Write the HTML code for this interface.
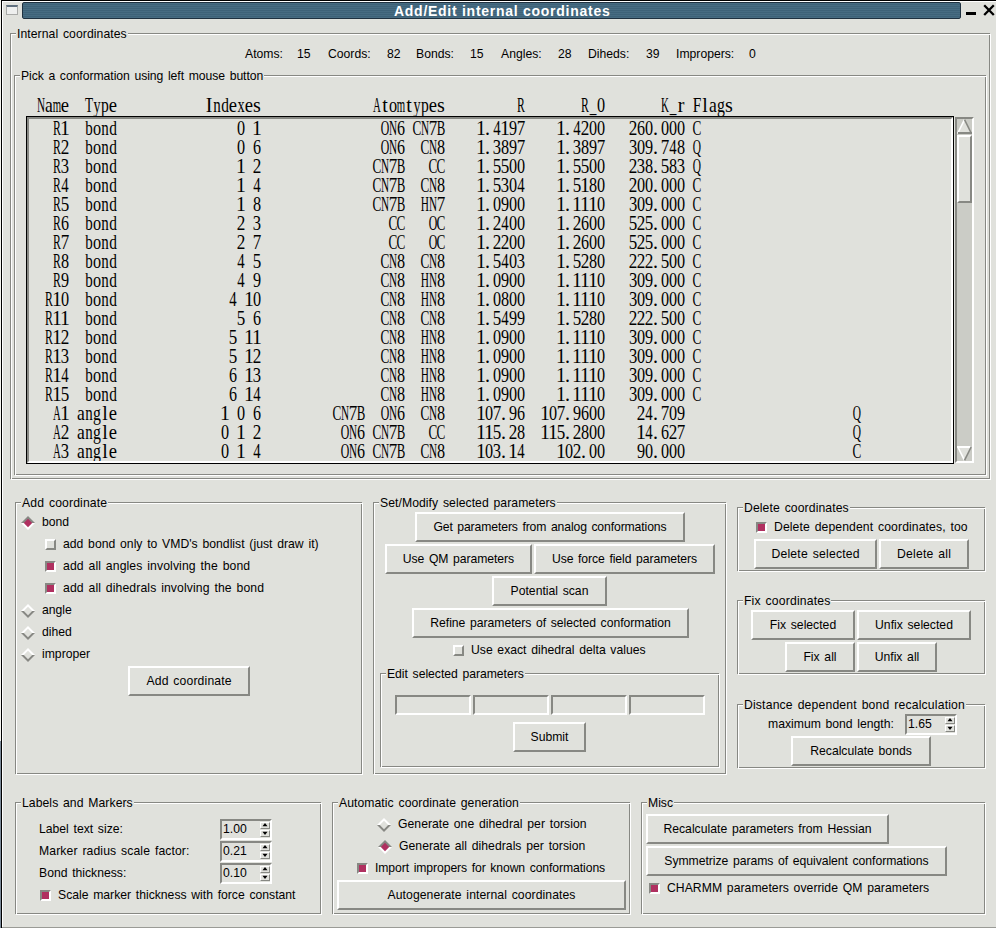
<!DOCTYPE html>
<html><head><meta charset="utf-8"><style>
html,body{margin:0;padding:0;width:996px;height:928px;overflow:hidden;background:#e0e1dc}
body>div,body>span,body>svg{position:absolute}
.t{font-family:"Liberation Sans",sans-serif;font-size:12.2px;line-height:14px;word-spacing:1.3px;color:#000;white-space:pre}
.bl{text-align:center}
.tt{font-family:"Liberation Sans",sans-serif;font-weight:bold;font-size:14px;letter-spacing:0.73px;color:#fff;white-space:pre}
.mono{font-family:"Liberation Mono",monospace;font-size:18px;line-height:19px;color:#000;white-space:pre;transform-origin:0 0;transform:scaleX(0.7407)}
</style></head><body>
<div style="left:0;top:0;width:996px;height:928px;background:#e0e1dc"></div>
<div style="left:0px;top:0px;width:1px;height:741px;background:#f4f4ef"></div>
<div style="left:0px;top:741px;width:1px;height:187px;background:#7b8a99"></div>
<div style="left:1px;top:0px;width:1px;height:928px;background:#000"></div>
<div style="left:2px;top:1px;width:1px;height:926px;background:#fff"></div>
<div style="left:1px;top:0px;width:995px;height:1px;background:#000"></div>
<div style="left:2px;top:1px;width:994px;height:1px;background:#fff"></div>
<div style="left:2px;top:927px;width:994px;height:1px;background:#9a9b96"></div>
<div style="left:22px;top:2px;width:939px;height:17px;box-sizing:border-box;border:1px solid #1f3140;border-radius:2px;background:repeating-linear-gradient(#476c82 0px,#476c82 1px,#3e6278 1px,#3e6278 2px)"></div>
<div class="tt" style="left:394px;top:3px;height:17px;line-height:17px">Add/Edit internal coordinates</div>
<div style="left:6px;top:5px;width:12px;height:10px;box-sizing:border-box;border:1px solid #a9aaa8;border-top:2px solid #5f6f7e;background:#eeefee"></div>
<div style="left:966px;top:12px;width:10px;height:3px;background:#000"></div>
<svg style="left:982px;top:4px" width="14" height="13" viewBox="0 0 14 13"><path d="M2.2 1.3 L11.8 11 M11.8 1.3 L2.2 11" stroke="#000" stroke-width="2.3"/></svg>
<div style="left:10px;top:33px;width:980px;height:446px;border:1px solid #878883;box-sizing:border-box"></div>
<div style="left:11px;top:34px;width:980px;height:446px;border:1px solid #ffffff;box-sizing:border-box"></div>
<span class="t" style="left:16px;top:27px;background:#e0e1dc;padding:0 1px 0 1px;letter-spacing:0.067px;">Internal coordinates</span>
<span class="t" style="left:245px;top:47px;">Atoms:</span>
<span class="t" style="left:297px;top:47px;">15</span>
<span class="t" style="left:328px;top:47px;">Coords:</span>
<span class="t" style="left:387px;top:47px;">82</span>
<span class="t" style="left:416px;top:47px;">Bonds:</span>
<span class="t" style="left:470px;top:47px;">15</span>
<span class="t" style="left:501px;top:47px;">Angles:</span>
<span class="t" style="left:558px;top:47px;">28</span>
<span class="t" style="left:588px;top:47px;">Diheds:</span>
<span class="t" style="left:646px;top:47px;">39</span>
<span class="t" style="left:676px;top:47px;">Impropers:</span>
<span class="t" style="left:749px;top:47px;">0</span>
<div style="left:14px;top:75px;width:972px;height:400px;border:1px solid #878883;box-sizing:border-box"></div>
<div style="left:15px;top:76px;width:972px;height:400px;border:1px solid #ffffff;box-sizing:border-box"></div>
<span class="t" style="left:20px;top:69px;background:#e0e1dc;padding:0 1px 0 1px;letter-spacing:-0.046px;">Pick a conformation using left mouse button</span>
<svg style="left:0;top:0" width="996" height="480"><g font-family="Liberation Serif" font-size="20.0" text-anchor="middle" fill="#000"><text transform="scale(0.56,1)" y="112" x="73.2">N</text><text transform="scale(0.88,1)" y="112" x="55.7 810.2">aa</text><text transform="scale(0.54,1)" y="112" x="105.6 698.1 742.6">mAm</text><text transform="scale(0.93,1)" y="112" x="69.9 121.5 250.5 267.7 465.6">eeeee</text><text transform="scale(0.66,1)" y="112" x="134.8">T</text><text transform="scale(0.71,1)" y="112" x="136.6 587.3">yy</text><text transform="scale(0.78,1)" y="112" x="134.6 544.9">pp</text><text y="112" x="209.0 257.0 385.0 409.0 441.0 681.0 705.0 729.0">Isttsrls</text><text transform="scale(0.75,1)" y="112" x="289.3">n</text><text transform="scale(0.77,1)" y="112" x="292.2 905.2">dF</text><text transform="scale(0.72,1)" y="112" x="334.7">x</text><text transform="scale(0.81,1)" y="112" x="485.2 742.0">o0</text><text transform="scale(0.59,1)" y="112" x="883.1 991.5">RR</text><text transform="scale(0.67,1)" y="112" x="885.1 1004.5">__</text><text transform="scale(0.55,1)" y="112" x="1209.1">K</text><text transform="scale(0.79,1)" y="112" x="912.7">g</text><text transform="scale(0.59,1)" y="135" x="96.6 652.5">RO</text><text transform="scale(0.99,1)" y="135" x="65.7 259.6 485.9 510.1 566.7">11111</text><text transform="scale(0.75,1)" y="135" x="118.7 140.0">bn</text><text transform="scale(0.81,1)" y="135" x="119.8 297.5 633.3 732.1 742.0 801.2 821.0 830.9 840.7">o09000000</text><text transform="scale(0.77,1)" y="135" x="146.8">d</text><text transform="scale(0.56,1)" y="135" x="701.8 758.9">NN</text><text transform="scale(0.8,1)" y="135" x="501.2 801.2">66</text><text transform="scale(0.66,1)" y="135" x="631.8 1056.1">CC</text><text transform="scale(0.85,1)" y="135" x="509.4 612.9">77</text><text transform="scale(0.64,1)" y="135" x="689.1">B</text><text y="135" x="487.5 567.5 655.5">...</text><text transform="scale(0.74,1)" y="135" x="671.6 779.7">44</text><text transform="scale(0.86,1)" y="135" x="680.2 736.0">22</text><text transform="scale(0.59,1)" y="154" x="96.6 652.5">RO</text><text transform="scale(0.86,1)" y="154" x="75.6">2</text><text transform="scale(0.75,1)" y="154" x="118.7 140.0">bn</text><text transform="scale(0.81,1)" y="154" x="119.8 297.5 544.4 623.5 633.3 722.2 732.1 791.4 801.2 840.7">o088989098</text><text transform="scale(0.77,1)" y="154" x="146.8">d</text><text transform="scale(0.8,1)" y="154" x="321.2 501.2">66</text><text transform="scale(0.56,1)" y="154" x="701.8 773.2">NN</text><text transform="scale(0.66,1)" y="154" x="643.9">C</text><text transform="scale(0.99,1)" y="154" x="485.9 566.7">11</text><text y="154" x="487.5 567.5 655.5">...</text><text transform="scale(0.83,1)" y="154" x="598.8 695.2 762.7">333</text><text transform="scale(0.85,1)" y="154" x="612.9 707.1 782.4">777</text><text transform="scale(0.74,1)" y="154" x="909.5">4</text><text transform="scale(0.57,1)" y="154" x="1222.8">Q</text><text transform="scale(0.59,1)" y="173" x="96.6">R</text><text transform="scale(0.83,1)" y="173" x="78.3 772.3 820.5">333</text><text transform="scale(0.75,1)" y="173" x="118.7 140.0">bn</text><text transform="scale(0.81,1)" y="173" x="119.8 633.3 643.2 732.1 742.0 801.2 830.9">o000088</text><text transform="scale(0.77,1)" y="173" x="146.8">d</text><text transform="scale(0.99,1)" y="173" x="243.4 485.9 566.7">111</text><text transform="scale(0.86,1)" y="173" x="298.8 736.0">22</text><text transform="scale(0.66,1)" y="173" x="571.2 656.1 668.2">CCC</text><text transform="scale(0.56,1)" y="173" x="687.5">N</text><text transform="scale(0.85,1)" y="173" x="462.4 584.7 594.1 678.8 688.2 782.4">755555</text><text transform="scale(0.64,1)" y="173" x="626.6">B</text><text y="173" x="487.5 567.5 655.5">...</text><text transform="scale(0.57,1)" y="173" x="1222.8">Q</text><text transform="scale(0.59,1)" y="192" x="96.6">R</text><text transform="scale(0.74,1)" y="192" x="87.8 347.3 704.1">444</text><text transform="scale(0.75,1)" y="192" x="118.7 140.0">bn</text><text transform="scale(0.81,1)" y="192" x="119.8 544.4 633.3 732.1 742.0 791.4 801.2 821.0 830.9 840.7">o808000000</text><text transform="scale(0.77,1)" y="192" x="146.8">d</text><text transform="scale(0.99,1)" y="192" x="243.4 485.9 566.7 590.9">1111</text><text transform="scale(0.66,1)" y="192" x="571.2 643.9 1056.1">CCC</text><text transform="scale(0.56,1)" y="192" x="687.5 773.2">NN</text><text transform="scale(0.85,1)" y="192" x="462.4 584.7 678.8">755</text><text transform="scale(0.64,1)" y="192" x="626.6">B</text><text y="192" x="487.5 567.5 655.5">...</text><text transform="scale(0.83,1)" y="192" x="608.4">3</text><text transform="scale(0.86,1)" y="192" x="736.0">2</text><text transform="scale(0.59,1)" y="211" x="96.6">R</text><text transform="scale(0.85,1)" y="211" x="76.5 462.4 518.8">577</text><text transform="scale(0.75,1)" y="211" x="118.7 140.0">bn</text><text transform="scale(0.81,1)" y="211" x="119.8 317.3 613.6 623.5 633.3 643.2 742.0 791.4 801.2 821.0 830.9 840.7">o80900009000</text><text transform="scale(0.77,1)" y="211" x="146.8">d</text><text transform="scale(0.99,1)" y="211" x="243.4 485.9 566.7 582.8 590.9 599.0">111111</text><text transform="scale(0.66,1)" y="211" x="571.2 1056.1">CC</text><text transform="scale(0.56,1)" y="211" x="687.5 773.2">NN</text><text transform="scale(0.64,1)" y="211" x="626.6">B</text><text transform="scale(0.57,1)" y="211" x="745.6">H</text><text y="211" x="487.5 567.5 655.5">...</text><text transform="scale(0.83,1)" y="211" x="762.7">3</text><text transform="scale(0.59,1)" y="230" x="96.6 733.9">RO</text><text transform="scale(0.8,1)" y="230" x="81.2 731.2">66</text><text transform="scale(0.75,1)" y="230" x="118.7 140.0">bn</text><text transform="scale(0.81,1)" y="230" x="119.8 633.3 643.2 732.1 742.0 821.0 830.9 840.7">o0000000</text><text transform="scale(0.77,1)" y="230" x="146.8">d</text><text transform="scale(0.86,1)" y="230" x="280.2 577.9 670.9 745.3">2222</text><text transform="scale(0.83,1)" y="230" x="309.6">3</text><text transform="scale(0.66,1)" y="230" x="595.5 607.6 668.2 1056.1">CCCC</text><text transform="scale(0.99,1)" y="230" x="485.9 566.7">11</text><text y="230" x="487.5 567.5 655.5">...</text><text transform="scale(0.74,1)" y="230" x="682.4">4</text><text transform="scale(0.85,1)" y="230" x="744.7 763.5">55</text><text transform="scale(0.59,1)" y="249" x="96.6 733.9">RO</text><text transform="scale(0.85,1)" y="249" x="76.5 302.4 744.7 763.5">7755</text><text transform="scale(0.75,1)" y="249" x="118.7 140.0">bn</text><text transform="scale(0.81,1)" y="249" x="119.8 633.3 643.2 732.1 742.0 821.0 830.9 840.7">o0000000</text><text transform="scale(0.77,1)" y="249" x="146.8">d</text><text transform="scale(0.86,1)" y="249" x="280.2 577.9 587.2 670.9 745.3">22222</text><text transform="scale(0.66,1)" y="249" x="595.5 607.6 668.2 1056.1">CCCC</text><text transform="scale(0.99,1)" y="249" x="485.9 566.7">11</text><text y="249" x="487.5 567.5 655.5">...</text><text transform="scale(0.8,1)" y="249" x="731.2">6</text><text transform="scale(0.59,1)" y="268" x="96.6">R</text><text transform="scale(0.81,1)" y="268" x="80.2 119.8 495.1 544.4 633.3 732.1 742.0 830.9 840.7">8o8808000</text><text transform="scale(0.75,1)" y="268" x="118.7 140.0">bn</text><text transform="scale(0.77,1)" y="268" x="146.8">d</text><text transform="scale(0.74,1)" y="268" x="325.7 682.4">44</text><text transform="scale(0.85,1)" y="268" x="302.4 584.7 678.8 782.4">5555</text><text transform="scale(0.66,1)" y="268" x="583.3 643.9 1056.1">CCC</text><text transform="scale(0.56,1)" y="268" x="701.8 773.2">NN</text><text transform="scale(0.99,1)" y="268" x="485.9 566.7">11</text><text y="268" x="487.5 567.5 655.5">...</text><text transform="scale(0.83,1)" y="268" x="627.7">3</text><text transform="scale(0.86,1)" y="268" x="680.2 736.0 745.3 754.7">2222</text><text transform="scale(0.59,1)" y="287" x="96.6">R</text><text transform="scale(0.81,1)" y="287" x="80.2 119.8 317.3 495.1 544.4 613.6 623.5 633.3 643.2 742.0 791.4 801.2 821.0 830.9 840.7">9o9880900009000</text><text transform="scale(0.75,1)" y="287" x="118.7 140.0">bn</text><text transform="scale(0.77,1)" y="287" x="146.8">d</text><text transform="scale(0.74,1)" y="287" x="325.7">4</text><text transform="scale(0.66,1)" y="287" x="583.3 1056.1">CC</text><text transform="scale(0.56,1)" y="287" x="701.8 773.2">NN</text><text transform="scale(0.57,1)" y="287" x="745.6">H</text><text transform="scale(0.99,1)" y="287" x="485.9 566.7 582.8 590.9 599.0">11111</text><text y="287" x="487.5 567.5 655.5">...</text><text transform="scale(0.83,1)" y="287" x="762.7">3</text><text transform="scale(0.59,1)" y="306" x="83.1">R</text><text transform="scale(0.99,1)" y="306" x="57.6 251.5 485.9 566.7 582.8 590.9 599.0">1111111</text><text transform="scale(0.81,1)" y="306" x="80.2 119.8 317.3 495.1 544.4 613.6 623.5 633.3 643.2 742.0 791.4 801.2 821.0 830.9 840.7">0o0880800009000</text><text transform="scale(0.75,1)" y="306" x="118.7 140.0">bn</text><text transform="scale(0.77,1)" y="306" x="146.8">d</text><text transform="scale(0.74,1)" y="306" x="314.9">4</text><text transform="scale(0.66,1)" y="306" x="583.3 1056.1">CC</text><text transform="scale(0.56,1)" y="306" x="701.8 773.2">NN</text><text transform="scale(0.57,1)" y="306" x="745.6">H</text><text y="306" x="487.5 567.5 655.5">...</text><text transform="scale(0.83,1)" y="306" x="762.7">3</text><text transform="scale(0.59,1)" y="325" x="83.1">R</text><text transform="scale(0.99,1)" y="325" x="57.6 65.7 485.9 566.7">1111</text><text transform="scale(0.75,1)" y="325" x="118.7 140.0">bn</text><text transform="scale(0.81,1)" y="325" x="119.8 495.1 544.4 633.3 643.2 732.1 742.0 830.9 840.7">o88998000</text><text transform="scale(0.77,1)" y="325" x="146.8">d</text><text transform="scale(0.85,1)" y="325" x="283.5 584.7 678.8 782.4">5555</text><text transform="scale(0.8,1)" y="325" x="321.2">6</text><text transform="scale(0.66,1)" y="325" x="583.3 643.9 1056.1">CCC</text><text transform="scale(0.56,1)" y="325" x="701.8 773.2">NN</text><text y="325" x="487.5 567.5 655.5">...</text><text transform="scale(0.74,1)" y="325" x="682.4">4</text><text transform="scale(0.86,1)" y="325" x="680.2 736.0 745.3 754.7">2222</text><text transform="scale(0.59,1)" y="344" x="83.1">R</text><text transform="scale(0.99,1)" y="344" x="57.6 251.5 259.6 485.9 566.7 582.8 590.9 599.0">11111111</text><text transform="scale(0.86,1)" y="344" x="75.6">2</text><text transform="scale(0.75,1)" y="344" x="118.7 140.0">bn</text><text transform="scale(0.81,1)" y="344" x="119.8 495.1 544.4 613.6 623.5 633.3 643.2 742.0 791.4 801.2 821.0 830.9 840.7">o880900009000</text><text transform="scale(0.77,1)" y="344" x="146.8">d</text><text transform="scale(0.85,1)" y="344" x="274.1">5</text><text transform="scale(0.66,1)" y="344" x="583.3 1056.1">CC</text><text transform="scale(0.56,1)" y="344" x="701.8 773.2">NN</text><text transform="scale(0.57,1)" y="344" x="745.6">H</text><text y="344" x="487.5 567.5 655.5">...</text><text transform="scale(0.83,1)" y="344" x="762.7">3</text><text transform="scale(0.59,1)" y="363" x="83.1">R</text><text transform="scale(0.99,1)" y="363" x="57.6 251.5 485.9 566.7 582.8 590.9 599.0">1111111</text><text transform="scale(0.83,1)" y="363" x="78.3 762.7">33</text><text transform="scale(0.75,1)" y="363" x="118.7 140.0">bn</text><text transform="scale(0.81,1)" y="363" x="119.8 495.1 544.4 613.6 623.5 633.3 643.2 742.0 791.4 801.2 821.0 830.9 840.7">o880900009000</text><text transform="scale(0.77,1)" y="363" x="146.8">d</text><text transform="scale(0.85,1)" y="363" x="274.1">5</text><text transform="scale(0.86,1)" y="363" x="298.8">2</text><text transform="scale(0.66,1)" y="363" x="583.3 1056.1">CC</text><text transform="scale(0.56,1)" y="363" x="701.8 773.2">NN</text><text transform="scale(0.57,1)" y="363" x="745.6">H</text><text y="363" x="487.5 567.5 655.5">...</text><text transform="scale(0.59,1)" y="382" x="83.1">R</text><text transform="scale(0.99,1)" y="382" x="57.6 251.5 485.9 566.7 582.8 590.9 599.0">1111111</text><text transform="scale(0.74,1)" y="382" x="87.8">4</text><text transform="scale(0.75,1)" y="382" x="118.7 140.0">bn</text><text transform="scale(0.81,1)" y="382" x="119.8 495.1 544.4 613.6 623.5 633.3 643.2 742.0 791.4 801.2 821.0 830.9 840.7">o880900009000</text><text transform="scale(0.77,1)" y="382" x="146.8">d</text><text transform="scale(0.8,1)" y="382" x="291.2">6</text><text transform="scale(0.83,1)" y="382" x="309.6 762.7">33</text><text transform="scale(0.66,1)" y="382" x="583.3 1056.1">CC</text><text transform="scale(0.56,1)" y="382" x="701.8 773.2">NN</text><text transform="scale(0.57,1)" y="382" x="745.6">H</text><text y="382" x="487.5 567.5 655.5">...</text><text transform="scale(0.59,1)" y="401" x="83.1">R</text><text transform="scale(0.99,1)" y="401" x="57.6 251.5 485.9 566.7 582.8 590.9 599.0">1111111</text><text transform="scale(0.85,1)" y="401" x="76.5">5</text><text transform="scale(0.75,1)" y="401" x="118.7 140.0">bn</text><text transform="scale(0.81,1)" y="401" x="119.8 495.1 544.4 613.6 623.5 633.3 643.2 742.0 791.4 801.2 821.0 830.9 840.7">o880900009000</text><text transform="scale(0.77,1)" y="401" x="146.8">d</text><text transform="scale(0.8,1)" y="401" x="291.2">6</text><text transform="scale(0.74,1)" y="401" x="347.3">4</text><text transform="scale(0.66,1)" y="401" x="583.3 1056.1">CC</text><text transform="scale(0.56,1)" y="401" x="701.8 773.2">NN</text><text transform="scale(0.57,1)" y="401" x="745.6">H</text><text y="401" x="487.5 567.5 655.5">...</text><text transform="scale(0.83,1)" y="401" x="762.7">3</text><text transform="scale(0.54,1)" y="420" x="105.6">A</text><text transform="scale(0.99,1)" y="420" x="65.7 227.3 485.9 550.5">1111</text><text transform="scale(0.88,1)" y="420" x="92.0">a</text><text transform="scale(0.75,1)" y="420" x="118.7">n</text><text transform="scale(0.79,1)" y="420" x="122.8">g</text><text y="420" x="105.0 503.5 567.5 655.5">l...</text><text transform="scale(0.93,1)" y="420" x="121.5">e</text><text transform="scale(0.81,1)" y="420" x="297.5 544.4 603.7 633.3 682.7 712.3 732.1 742.0 830.9 840.7">0809090009</text><text transform="scale(0.8,1)" y="420" x="321.2 501.2 651.2 731.2">6666</text><text transform="scale(0.66,1)" y="420" x="510.6 643.9">CC</text><text transform="scale(0.56,1)" y="420" x="616.1 701.8 773.2">NNN</text><text transform="scale(0.85,1)" y="420" x="415.3 584.7 660.0 782.4">7777</text><text transform="scale(0.64,1)" y="420" x="564.1">B</text><text transform="scale(0.59,1)" y="420" x="652.5">O</text><text transform="scale(0.86,1)" y="420" x="745.3">2</text><text transform="scale(0.74,1)" y="420" x="877.0">4</text><text transform="scale(0.57,1)" y="420" x="1503.5">Q</text><text transform="scale(0.54,1)" y="439" x="105.6">A</text><text transform="scale(0.86,1)" y="439" x="75.6 298.8 596.5 670.9 782.6">22222</text><text transform="scale(0.88,1)" y="439" x="92.0">a</text><text transform="scale(0.75,1)" y="439" x="118.7">n</text><text transform="scale(0.79,1)" y="439" x="122.8">g</text><text y="439" x="105.0 503.5 567.5 655.5">l...</text><text transform="scale(0.93,1)" y="439" x="121.5">e</text><text transform="scale(0.81,1)" y="439" x="277.8 643.2 722.2 732.1 742.0">08800</text><text transform="scale(0.99,1)" y="439" x="243.4 485.9 493.9 550.5 558.6 647.5">111111</text><text transform="scale(0.59,1)" y="439" x="584.7">O</text><text transform="scale(0.56,1)" y="439" x="630.4 687.5">NN</text><text transform="scale(0.8,1)" y="439" x="451.2 831.2">66</text><text transform="scale(0.66,1)" y="439" x="571.2 656.1 668.2">CCC</text><text transform="scale(0.85,1)" y="439" x="462.4 584.7 660.0 801.2">7557</text><text transform="scale(0.64,1)" y="439" x="626.6">B</text><text transform="scale(0.74,1)" y="439" x="877.0">4</text><text transform="scale(0.57,1)" y="439" x="1503.5">Q</text><text transform="scale(0.54,1)" y="458" x="105.6">A</text><text transform="scale(0.83,1)" y="458" x="78.3 598.8">33</text><text transform="scale(0.88,1)" y="458" x="92.0">a</text><text transform="scale(0.75,1)" y="458" x="118.7">n</text><text transform="scale(0.79,1)" y="458" x="122.8">g</text><text y="458" x="105.0 503.5 583.5 655.5">l...</text><text transform="scale(0.93,1)" y="458" x="121.5">e</text><text transform="scale(0.81,1)" y="458" x="277.8 544.4 603.7 702.5 732.1 742.0 791.4 801.2 821.0 830.9 840.7">08000090000</text><text transform="scale(0.99,1)" y="458" x="243.4 485.9 518.2 566.7">1111</text><text transform="scale(0.74,1)" y="458" x="347.3 704.1">44</text><text transform="scale(0.59,1)" y="458" x="584.7">O</text><text transform="scale(0.56,1)" y="458" x="630.4 687.5 773.2">NNN</text><text transform="scale(0.8,1)" y="458" x="451.2">6</text><text transform="scale(0.66,1)" y="458" x="571.2 643.9 1298.5">CCC</text><text transform="scale(0.85,1)" y="458" x="462.4">7</text><text transform="scale(0.64,1)" y="458" x="626.6">B</text><text transform="scale(0.86,1)" y="458" x="670.9">2</text></g></svg>
<div style="left:26px;top:116px;width:928px;height:348px;box-sizing:border-box;border:1px solid #000"></div>
<div style="left:27px;top:117px;width:926px;height:346px;box-sizing:border-box;border:2px solid;border-color:#878883 #ffffff #ffffff #878883"></div>
<div style="left:955px;top:117px;width:19px;height:346px;box-sizing:border-box;border:2px solid;border-color:#878883 #ffffff #ffffff #878883;background:#cbccc6"></div>
<div style="left:957px;top:135px;width:15px;height:68px;box-sizing:border-box;border:2px solid;border-color:#ffffff #878883 #878883 #ffffff"></div>
<div style="left:959px;top:137px;width:11px;height:64px;background:#e0e1dc"></div>
<svg style="left:957px;top:119px" width="15" height="15" viewBox="0 0 15 15"><polygon points="0,15 7.5,0 15,15" fill="#e0e1dc"/><line x1="0.6" y1="14.5" x2="7.5" y2="0.6" stroke="#ffffff" stroke-width="1.6"/><line x1="7.5" y1="0.6" x2="14.4" y2="14.5" stroke="#878883" stroke-width="1.6"/><rect x="1" y="13" width="14" height="2" fill="#878883"/></svg>
<svg style="left:957px;top:446px" width="15" height="15" viewBox="0 0 15 15"><polygon points="0,0 15,0 7.5,15" fill="#e0e1dc"/><rect x="0" y="0" width="15" height="2" fill="#ffffff"/><line x1="0.6" y1="0.5" x2="7.5" y2="14.4" stroke="#ffffff" stroke-width="1.6"/><line x1="14.4" y1="0.5" x2="7.5" y2="14.4" stroke="#878883" stroke-width="1.6"/></svg>
<div style="left:15px;top:502px;width:347px;height:272px;border:1px solid #878883;box-sizing:border-box"></div>
<div style="left:16px;top:503px;width:347px;height:272px;border:1px solid #ffffff;box-sizing:border-box"></div>
<span class="t" style="left:21px;top:496px;background:#e0e1dc;padding:0 1px 0 1px;letter-spacing:0.136px;">Add coordinate</span>
<svg style="left:21px;top:515.5px" width="15" height="14" viewBox="0 0 15 14"><polygon points="0,7 7,0 14,7" fill="#878883"/><polygon points="0,7 14,7 7,14" fill="#ffffff"/><polygon points="7,2.8 11.2,7 7,11.2 2.8,7" fill="#b03060"/></svg>
<span class="t" style="left:42px;top:515px;">bond</span>
<div style="left:45px;top:539px;width:11px;height:11px;box-sizing:border-box;border:2px solid;border-color:#ffffff #878883 #878883 #ffffff;background:#e0e1dc"></div>
<span class="t" style="left:63px;top:537px;letter-spacing:0.023px;">add bond only to VMD's bondlist (just draw it)</span>
<div style="left:45px;top:561px;width:11px;height:11px;box-sizing:border-box;border:2px solid;border-color:#878883 #ffffff #ffffff #878883;background:#b03060"></div>
<span class="t" style="left:63px;top:559px;letter-spacing:0.117px;">add all angles involving the bond</span>
<div style="left:45px;top:583px;width:11px;height:11px;box-sizing:border-box;border:2px solid;border-color:#878883 #ffffff #ffffff #878883;background:#b03060"></div>
<span class="t" style="left:63px;top:581px;letter-spacing:0.117px;">add all dihedrals involving the bond</span>
<svg style="left:21px;top:603.5px" width="15" height="14" viewBox="0 0 15 14"><polygon points="0,7 7,0 14,7" fill="#ffffff"/><polygon points="0,7 14,7 7,14" fill="#878883"/><polygon points="7,2.8 11.2,7 7,11.2 2.8,7" fill="#e0e1dc"/></svg>
<span class="t" style="left:42px;top:603px;">angle</span>
<svg style="left:21px;top:625.5px" width="15" height="14" viewBox="0 0 15 14"><polygon points="0,7 7,0 14,7" fill="#ffffff"/><polygon points="0,7 14,7 7,14" fill="#878883"/><polygon points="7,2.8 11.2,7 7,11.2 2.8,7" fill="#e0e1dc"/></svg>
<span class="t" style="left:42px;top:625px;">dihed</span>
<svg style="left:21px;top:647.5px" width="15" height="14" viewBox="0 0 15 14"><polygon points="0,7 7,0 14,7" fill="#ffffff"/><polygon points="0,7 14,7 7,14" fill="#878883"/><polygon points="7,2.8 11.2,7 7,11.2 2.8,7" fill="#e0e1dc"/></svg>
<span class="t" style="left:42px;top:647px;">improper</span>
<div style="left:128px;top:666px;width:122px;height:30px;box-sizing:border-box;border:2px solid;border-color:#ffffff #878883 #878883 #ffffff"></div>
<div class="t bl" style="left:128px;top:666px;width:122px;height:30px;line-height:30px;letter-spacing:0.136px;text-indent:0.136px;">Add coordinate</div>
<div style="left:373px;top:502px;width:353px;height:272px;border:1px solid #878883;box-sizing:border-box"></div>
<div style="left:374px;top:503px;width:353px;height:272px;border:1px solid #ffffff;box-sizing:border-box"></div>
<span class="t" style="left:379px;top:496px;background:#e0e1dc;padding:0 1px 0 1px;letter-spacing:0.059px;">Set/Modify selected parameters</span>
<div style="left:415px;top:512px;width:270px;height:30px;box-sizing:border-box;border:2px solid;border-color:#ffffff #878883 #878883 #ffffff"></div>
<div class="t bl" style="left:415px;top:512px;width:270px;height:30px;line-height:30px;letter-spacing:-0.112px;text-indent:-0.112px;">Get parameters from analog conformations</div>
<div style="left:385px;top:544px;width:147px;height:30px;box-sizing:border-box;border:2px solid;border-color:#ffffff #878883 #878883 #ffffff"></div>
<div class="t bl" style="left:385px;top:544px;width:147px;height:30px;line-height:30px;letter-spacing:-0.062px;text-indent:-0.062px;">Use QM parameters</div>
<div style="left:534px;top:544px;width:181px;height:30px;box-sizing:border-box;border:2px solid;border-color:#ffffff #878883 #878883 #ffffff"></div>
<div class="t bl" style="left:534px;top:544px;width:181px;height:30px;line-height:30px;letter-spacing:-0.065px;text-indent:-0.065px;">Use force field parameters</div>
<div style="left:492px;top:576px;width:115px;height:30px;box-sizing:border-box;border:2px solid;border-color:#ffffff #878883 #878883 #ffffff"></div>
<div class="t bl" style="left:492px;top:576px;width:115px;height:30px;line-height:30px;">Potential scan</div>
<div style="left:412px;top:608px;width:277px;height:30px;box-sizing:border-box;border:2px solid;border-color:#ffffff #878883 #878883 #ffffff"></div>
<div class="t bl" style="left:412px;top:608px;width:277px;height:30px;line-height:30px;letter-spacing:-0.030px;text-indent:-0.030px;">Refine parameters of selected conformation</div>
<div style="left:453px;top:645px;width:11px;height:11px;box-sizing:border-box;border:2px solid;border-color:#ffffff #878883 #878883 #ffffff;background:#e0e1dc"></div>
<span class="t" style="left:471px;top:643px;">Use exact dihedral delta values</span>
<div style="left:380px;top:673px;width:339px;height:94px;border:1px solid #878883;box-sizing:border-box"></div>
<div style="left:381px;top:674px;width:339px;height:94px;border:1px solid #ffffff;box-sizing:border-box"></div>
<span class="t" style="left:386px;top:667px;background:#e0e1dc;padding:0 1px 0 1px;letter-spacing:-0.024px;">Edit selected parameters</span>
<div style="left:395px;top:695px;width:76px;height:20px;box-sizing:border-box;border:2px solid;border-color:#878883 #ffffff #ffffff #878883"></div>
<div style="left:473px;top:695px;width:76px;height:20px;box-sizing:border-box;border:2px solid;border-color:#878883 #ffffff #ffffff #878883"></div>
<div style="left:551px;top:695px;width:76px;height:20px;box-sizing:border-box;border:2px solid;border-color:#878883 #ffffff #ffffff #878883"></div>
<div style="left:629px;top:695px;width:76px;height:20px;box-sizing:border-box;border:2px solid;border-color:#878883 #ffffff #ffffff #878883"></div>
<div style="left:513px;top:722px;width:73px;height:30px;box-sizing:border-box;border:2px solid;border-color:#ffffff #878883 #878883 #ffffff"></div>
<div class="t bl" style="left:513px;top:722px;width:73px;height:30px;line-height:30px;">Submit</div>
<div style="left:737px;top:507px;width:248px;height:64px;border:1px solid #878883;box-sizing:border-box"></div>
<div style="left:738px;top:508px;width:248px;height:64px;border:1px solid #ffffff;box-sizing:border-box"></div>
<span class="t" style="left:743px;top:501px;background:#e0e1dc;padding:0 1px 0 1px;letter-spacing:0.105px;">Delete coordinates</span>
<div style="left:756px;top:522px;width:11px;height:11px;box-sizing:border-box;border:2px solid;border-color:#878883 #ffffff #ffffff #878883;background:#b03060"></div>
<span class="t" style="left:774px;top:520px;letter-spacing:0.105px;">Delete dependent coordinates, too</span>
<div style="left:754px;top:539px;width:123px;height:30px;box-sizing:border-box;border:2px solid;border-color:#ffffff #878883 #878883 #ffffff"></div>
<div class="t bl" style="left:754px;top:539px;width:123px;height:30px;line-height:30px;letter-spacing:0.196px;text-indent:0.196px;">Delete selected</div>
<div style="left:879px;top:539px;width:90px;height:30px;box-sizing:border-box;border:2px solid;border-color:#ffffff #878883 #878883 #ffffff"></div>
<div class="t bl" style="left:879px;top:539px;width:90px;height:30px;line-height:30px;letter-spacing:0.199px;text-indent:0.199px;">Delete all</div>
<div style="left:737px;top:600px;width:248px;height:74px;border:1px solid #878883;box-sizing:border-box"></div>
<div style="left:738px;top:601px;width:248px;height:74px;border:1px solid #ffffff;box-sizing:border-box"></div>
<span class="t" style="left:743px;top:594px;background:#e0e1dc;padding:0 1px 0 1px;letter-spacing:0.163px;">Fix coordinates</span>
<div style="left:751px;top:610px;width:104px;height:30px;box-sizing:border-box;border:2px solid;border-color:#ffffff #878883 #878883 #ffffff"></div>
<div class="t bl" style="left:751px;top:610px;width:104px;height:30px;line-height:30px;">Fix selected</div>
<div style="left:857px;top:610px;width:114px;height:30px;box-sizing:border-box;border:2px solid;border-color:#ffffff #878883 #878883 #ffffff"></div>
<div class="t bl" style="left:857px;top:610px;width:114px;height:30px;line-height:30px;">Unfix selected</div>
<div style="left:785px;top:642px;width:70px;height:30px;box-sizing:border-box;border:2px solid;border-color:#ffffff #878883 #878883 #ffffff"></div>
<div class="t bl" style="left:785px;top:642px;width:70px;height:30px;line-height:30px;">Fix all</div>
<div style="left:857px;top:642px;width:80px;height:30px;box-sizing:border-box;border:2px solid;border-color:#ffffff #878883 #878883 #ffffff"></div>
<div class="t bl" style="left:857px;top:642px;width:80px;height:30px;line-height:30px;">Unfix all</div>
<div style="left:737px;top:704px;width:248px;height:64px;border:1px solid #878883;box-sizing:border-box"></div>
<div style="left:738px;top:705px;width:248px;height:64px;border:1px solid #ffffff;box-sizing:border-box"></div>
<span class="t" style="left:743px;top:698px;background:#e0e1dc;padding:0 1px 0 1px;letter-spacing:0.172px;">Distance dependent bond recalculation</span>
<span class="t" style="left:768px;top:717px;">maximum bond length:</span>
<div style="left:905px;top:714px;width:52px;height:21px;box-sizing:border-box;border:2px solid;border-color:#878883 #ffffff #ffffff #878883"></div>
<span class="t" style="left:908px;top:717px;">1.65</span>
<div style="left:945px;top:717px;width:10px;height:7px;box-sizing:border-box;border:1px solid;border-color:#ffffff #878883 #878883 #ffffff"></div>
<div style="left:945px;top:725px;width:10px;height:7px;box-sizing:border-box;border:1px solid;border-color:#ffffff #878883 #878883 #ffffff"></div>
<svg style="left:0;top:0;overflow:visible" width="1" height="1"><polygon points="947.5,721.2 952.5,721.2 950.0,718" fill="#000"/><polygon points="947.5,726.8 952.5,726.8 950.0,730" fill="#000"/></svg>
<div style="left:791px;top:736px;width:140px;height:30px;box-sizing:border-box;border:2px solid;border-color:#ffffff #878883 #878883 #ffffff"></div>
<div class="t bl" style="left:791px;top:736px;width:140px;height:30px;line-height:30px;">Recalculate bonds</div>
<div style="left:15px;top:802px;width:306px;height:112px;border:1px solid #878883;box-sizing:border-box"></div>
<div style="left:16px;top:803px;width:306px;height:112px;border:1px solid #ffffff;box-sizing:border-box"></div>
<span class="t" style="left:21px;top:796px;background:#e0e1dc;padding:0 1px 0 1px;letter-spacing:0.062px;">Labels and Markers</span>
<span class="t" style="left:39px;top:822px;">Label text size:</span>
<div style="left:220px;top:819px;width:52px;height:21px;box-sizing:border-box;border:2px solid;border-color:#878883 #ffffff #ffffff #878883"></div>
<span class="t" style="left:223px;top:822px;">1.00</span>
<div style="left:260px;top:822px;width:10px;height:7px;box-sizing:border-box;border:1px solid;border-color:#ffffff #878883 #878883 #ffffff"></div>
<div style="left:260px;top:830px;width:10px;height:7px;box-sizing:border-box;border:1px solid;border-color:#ffffff #878883 #878883 #ffffff"></div>
<svg style="left:0;top:0;overflow:visible" width="1" height="1"><polygon points="262.5,826.2 267.5,826.2 265.0,823" fill="#000"/><polygon points="262.5,831.8 267.5,831.8 265.0,835" fill="#000"/></svg>
<span class="t" style="left:39px;top:844px;letter-spacing:0.113px;">Marker radius scale factor:</span>
<div style="left:220px;top:841px;width:52px;height:21px;box-sizing:border-box;border:2px solid;border-color:#878883 #ffffff #ffffff #878883"></div>
<span class="t" style="left:223px;top:844px;">0.21</span>
<div style="left:260px;top:844px;width:10px;height:7px;box-sizing:border-box;border:1px solid;border-color:#ffffff #878883 #878883 #ffffff"></div>
<div style="left:260px;top:852px;width:10px;height:7px;box-sizing:border-box;border:1px solid;border-color:#ffffff #878883 #878883 #ffffff"></div>
<svg style="left:0;top:0;overflow:visible" width="1" height="1"><polygon points="262.5,848.2 267.5,848.2 265.0,845" fill="#000"/><polygon points="262.5,853.8 267.5,853.8 265.0,857" fill="#000"/></svg>
<span class="t" style="left:39px;top:866px;">Bond thickness:</span>
<div style="left:220px;top:863px;width:52px;height:21px;box-sizing:border-box;border:2px solid;border-color:#878883 #ffffff #ffffff #878883"></div>
<span class="t" style="left:223px;top:866px;">0.10</span>
<div style="left:260px;top:866px;width:10px;height:7px;box-sizing:border-box;border:1px solid;border-color:#ffffff #878883 #878883 #ffffff"></div>
<div style="left:260px;top:874px;width:10px;height:7px;box-sizing:border-box;border:1px solid;border-color:#ffffff #878883 #878883 #ffffff"></div>
<svg style="left:0;top:0;overflow:visible" width="1" height="1"><polygon points="262.5,870.2 267.5,870.2 265.0,867" fill="#000"/><polygon points="262.5,875.8 267.5,875.8 265.0,879" fill="#000"/></svg>
<div style="left:40px;top:890px;width:11px;height:11px;box-sizing:border-box;border:2px solid;border-color:#878883 #ffffff #ffffff #878883;background:#b03060"></div>
<span class="t" style="left:58px;top:888px;">Scale marker thickness with force constant</span>
<div style="left:332px;top:802px;width:298px;height:112px;border:1px solid #878883;box-sizing:border-box"></div>
<div style="left:333px;top:803px;width:298px;height:112px;border:1px solid #ffffff;box-sizing:border-box"></div>
<span class="t" style="left:338px;top:796px;background:#e0e1dc;padding:0 1px 0 1px;letter-spacing:0.060px;">Automatic coordinate generation</span>
<svg style="left:377px;top:817.5px" width="15" height="14" viewBox="0 0 15 14"><polygon points="0,7 7,0 14,7" fill="#ffffff"/><polygon points="0,7 14,7 7,14" fill="#878883"/><polygon points="7,2.8 11.2,7 7,11.2 2.8,7" fill="#e0e1dc"/></svg>
<span class="t" style="left:398px;top:817px;letter-spacing:0.033px;">Generate one dihedral per torsion</span>
<svg style="left:378px;top:839.5px" width="15" height="14" viewBox="0 0 15 14"><polygon points="0,7 7,0 14,7" fill="#878883"/><polygon points="0,7 14,7 7,14" fill="#ffffff"/><polygon points="7,2.8 11.2,7 7,11.2 2.8,7" fill="#b03060"/></svg>
<span class="t" style="left:399px;top:839px;letter-spacing:0.030px;">Generate all dihedrals per torsion</span>
<div style="left:357px;top:863px;width:11px;height:11px;box-sizing:border-box;border:2px solid;border-color:#878883 #ffffff #ffffff #878883;background:#b03060"></div>
<span class="t" style="left:375px;top:861px;letter-spacing:-0.084px;">Import impropers for known conformations</span>
<div style="left:337px;top:880px;width:289px;height:30px;box-sizing:border-box;border:2px solid;border-color:#ffffff #878883 #878883 #ffffff"></div>
<div class="t bl" style="left:337px;top:880px;width:289px;height:30px;line-height:30px;letter-spacing:0.075px;text-indent:0.075px;">Autogenerate internal coordinates</div>
<div style="left:641px;top:802px;width:344px;height:112px;border:1px solid #878883;box-sizing:border-box"></div>
<div style="left:642px;top:803px;width:344px;height:112px;border:1px solid #ffffff;box-sizing:border-box"></div>
<span class="t" style="left:647px;top:796px;background:#e0e1dc;padding:0 1px 0 1px;">Misc</span>
<div style="left:646px;top:814px;width:243px;height:30px;box-sizing:border-box;border:2px solid;border-color:#ffffff #878883 #878883 #ffffff"></div>
<div class="t bl" style="left:646px;top:814px;width:243px;height:30px;line-height:30px;letter-spacing:0.011px;text-indent:0.011px;">Recalculate parameters from Hessian</div>
<div style="left:646px;top:846px;width:301px;height:30px;box-sizing:border-box;border:2px solid;border-color:#ffffff #878883 #878883 #ffffff"></div>
<div class="t bl" style="left:646px;top:846px;width:301px;height:30px;line-height:30px;letter-spacing:-0.038px;text-indent:-0.038px;">Symmetrize params of equivalent conformations</div>
<div style="left:649px;top:883px;width:11px;height:11px;box-sizing:border-box;border:2px solid;border-color:#878883 #ffffff #ffffff #878883;background:#b03060"></div>
<span class="t" style="left:667px;top:881px;letter-spacing:0.042px;">CHARMM parameters override QM parameters</span>
</body></html>
